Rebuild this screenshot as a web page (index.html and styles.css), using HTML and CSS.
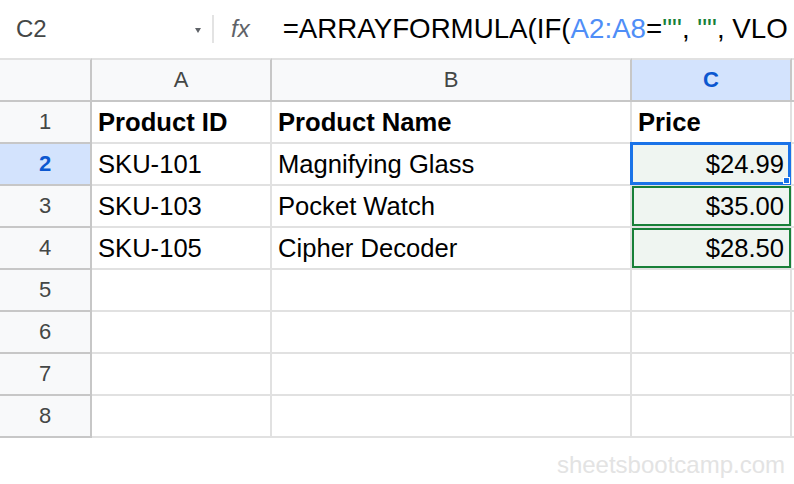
FILE: index.html
```html
<!DOCTYPE html>
<html lang="en">
<head>
<meta charset="utf-8">
<title>Sheet</title>
<link rel="stylesheet" href="styles.css">
</head>
<body>
<div class="formula-bar">
  <div class="name-box"><span class="ref">C2</span><span class="caret"></span></div>
  <div class="divider"></div>
  <div class="fx">fx</div>
  <div class="formula">=ARRAYFORMULA(IF(<span class="ref-blue">A2:A8</span>=<span class="str">""</span>, <span class="str">""</span>, VLO</div>
</div>
<div class="sheet">
  <div class="cell hdr corner"></div>
  <div class="cell hdr col">A</div>
  <div class="cell hdr col">B</div>
  <div class="cell hdr col active">C</div>
  <div class="cell hdr col last"></div>

  <div class="cell hdr row">1</div>
  <div class="cell bold">Product ID</div>
  <div class="cell bold">Product Name</div>
  <div class="cell bold">Price</div>
  <div class="cell last"></div>

  <div class="cell hdr row active">2</div>
  <div class="cell">SKU-101</div>
  <div class="cell">Magnifying Glass</div>
  <div class="cell num arr selected">$24.99<span class="handle"></span></div>
  <div class="cell last"></div>

  <div class="cell hdr row">3</div>
  <div class="cell">SKU-103</div>
  <div class="cell">Pocket Watch</div>
  <div class="cell num arr ranged">$35.00</div>
  <div class="cell last"></div>

  <div class="cell hdr row">4</div>
  <div class="cell">SKU-105</div>
  <div class="cell">Cipher Decoder</div>
  <div class="cell num arr ranged">$28.50</div>
  <div class="cell last"></div>

  <div class="cell hdr row">5</div>
  <div class="cell"></div>
  <div class="cell"></div>
  <div class="cell"></div>
  <div class="cell last"></div>

  <div class="cell hdr row">6</div>
  <div class="cell"></div>
  <div class="cell"></div>
  <div class="cell"></div>
  <div class="cell last"></div>

  <div class="cell hdr row">7</div>
  <div class="cell"></div>
  <div class="cell"></div>
  <div class="cell"></div>
  <div class="cell last"></div>

  <div class="cell hdr row">8</div>
  <div class="cell"></div>
  <div class="cell"></div>
  <div class="cell"></div>
  <div class="cell last"></div>
</div>
<div class="watermark">sheetsbootcamp.com</div>
</body>
</html>
```

FILE: styles.css
```css
html, body {
  margin: 0;
  padding: 0;
  background: #ffffff;
  font-family: "Liberation Sans", Arial, sans-serif;
  width: 794px;
  height: 484px;
  overflow: hidden;
}

.formula-bar {
  height: 58px;
  display: flex;
  align-items: center;
  white-space: nowrap;
  overflow: hidden;
}

.name-box {
  width: 212px;
  box-sizing: border-box;
  padding: 0 11px 0 16px;
  display: flex;
  align-items: center;
  justify-content: space-between;
  flex: none;
}

.name-box .ref {
  font-size: 24px;
  color: #444746;
}

.caret {
  width: 0;
  height: 0;
  border-left: 3.5px solid transparent;
  border-right: 3.5px solid transparent;
  border-top: 5px solid #5f6368;
  margin-top: 2px;
}

.divider {
  width: 2px;
  height: 28px;
  background: #e3e3e3;
  flex: none;
}

.fx {
  margin-left: 17px;
  font-size: 24px;
  font-style: italic;
  color: #5f6368;
  flex: none;
}

.formula {
  margin-left: 33px;
  font-size: 27.7px;
  color: #000000;
  flex: none;
}

.ref-blue {
  color: #4f8ef7;
}

.str {
  color: #188038;
}

.sheet {
  display: grid;
  grid-template-columns: 92px 180px 360px 160px 1fr;
  grid-template-rows: 44px repeat(8, 42px);
}

.cell {
  box-sizing: border-box;
  border-right: 2px solid #e1e1e1;
  border-bottom: 2px solid #e1e1e1;
  display: flex;
  align-items: center;
  padding: 0 6px;
  font-size: 25.6px;
  color: #000000;
  white-space: nowrap;
  overflow: hidden;
  position: relative;
}

.cell.last {
  border-right: none;
}

.cell.bold {
  font-weight: bold;
}

.cell.num {
  justify-content: flex-end;
}

.hdr {
  background: #f8f9fa;
  border-right-color: #c7c7c7;
  border-bottom-color: #c7c7c7;
  color: #444746;
  font-size: 22px;
  justify-content: center;
  padding: 0;
}

.hdr.col,
.hdr.corner {
  border-top: 2px solid #e1e1e1;
}

.hdr.col.last {
  border-right: none;
}

.hdr.active {
  background: #d3e3fd;
  color: #0b57d0;
  font-weight: bold;
}

.arr {
  background: #eff5f1;
  overflow: visible;
}

.ranged::after {
  content: "";
  position: absolute;
  left: 0;
  top: 0;
  right: -1px;
  bottom: 0;
  border: 2px solid #188038;
  pointer-events: none;
}

.selected::after {
  content: "";
  position: absolute;
  left: -2px;
  top: -2px;
  right: -1px;
  bottom: -1px;
  border: 3px solid #1a73e8;
  pointer-events: none;
  z-index: 2;
}

.handle {
  position: absolute;
  right: 0;
  bottom: 0;
  width: 5px;
  height: 5px;
  background: #1a73e8;
  border: 1px solid #ffffff;
  z-index: 3;
}

.watermark {
  margin-top: 13px;
  padding-right: 9px;
  text-align: right;
  font-size: 24px;
  line-height: 28px;
  color: #e3e3e3;
}
```
